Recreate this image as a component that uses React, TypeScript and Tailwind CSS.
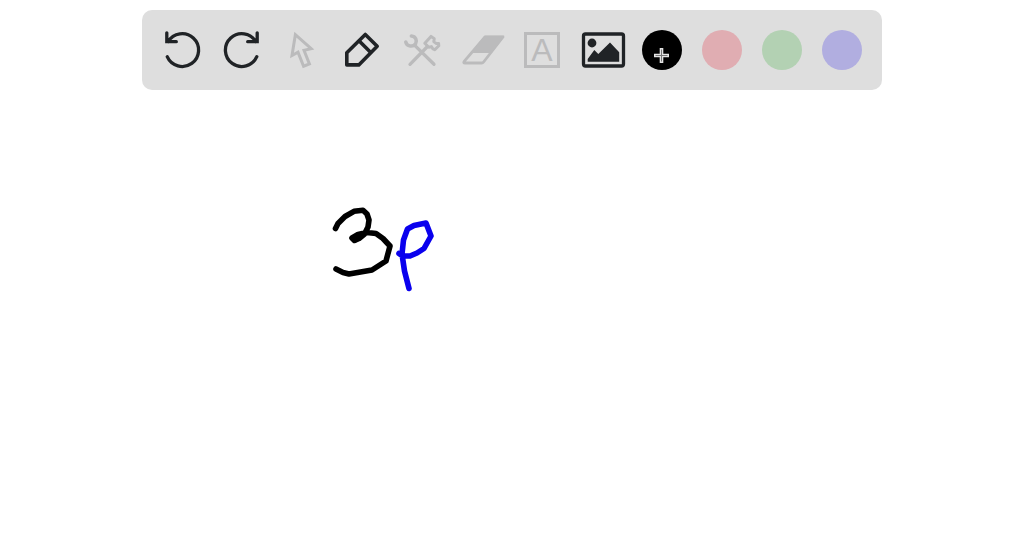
import { useState, type ReactNode } from "react";

type Tool = { label: string; icon: ReactNode; active: boolean };

function Icon({ children }: { children: ReactNode }) {
  return (
    <svg
      viewBox="0 0 48 48"
      className="size-12"
      fill="none"
      stroke="currentColor"
      strokeWidth="3.3"
      strokeLinecap="round"
      strokeLinejoin="round"
      aria-hidden="true"
    >
      {children}
    </svg>
  );
}

const tools: Tool[] = [
  {
    label: "Undo",
    active: true,
    icon: (
      <Icon>
        <path strokeLinejoin="miter" d="M8.8 6.8v8.9h9.5M10.1 15.7A16.4 16.4 0 1 1 9.2 30.7" />
      </Icon>
    ),
  },
  {
    label: "Redo",
    active: true,
    icon: (
      <Icon>
        <path strokeLinejoin="miter" d="M39.2 6.8v8.9h-9.5M37.9 15.7A16.4 16.4 0 1 0 38.8 30.7" />
      </Icon>
    ),
  },
  {
    label: "Select",
    active: false,
    icon: (
      <Icon>
        <path
          strokeWidth="3"
          strokeLinejoin="miter"
          d="M17.4 8.6 14 29.5 20 26.2 25.6 40.2 31.4 38 26 24.3 33.2 22.6Z"
        />
      </Icon>
    ),
  },
  {
    label: "Pen",
    active: true,
    icon: (
      <Icon>
        <path strokeWidth="3.6" d="M27.3 8.5 39.2 20.3 20.8 38.9H8.8V26.7ZM21 14.8 33 26.7" />
      </Icon>
    ),
  },
  {
    label: "Tools",
    active: false,
    icon: (
      <Icon>
        <path d="M17 19.6 36 38.3M12 38.3 29 21" />
        <path strokeWidth="3.6" d="M13.4 10C17.6 10.4 19.4 14.4 17.6 17.6 15.4 21.2 8.6 20.8 7.8 16" />
        <path
          strokeWidth="3"
          d="M26.8 17.2 33 10.4 36.2 12.8 35.8 15.6 38.4 17.6 40.6 17.4 40.8 19.8 36.8 23.8 34.6 22.6 33.4 20.6 30.8 21.2Z"
        />
      </Icon>
    ),
  },
  {
    label: "Eraser",
    active: false,
    icon: (
      <Icon>
        <path strokeWidth="2.8" d="M27 11H45L25.6 36Q24.8 37 23.6 37H7Q5 37 6.2 35.4Z" />
        <path fill="currentColor" stroke="none" d="M26.5 9.7H46.4L33.4 27H13.6Z" />
      </Icon>
    ),
  },
  {
    label: "Text",
    active: false,
    icon: (
      <span className="flex size-9 items-center justify-center border-3 border-current text-[32px] leading-none">
        A
      </span>
    ),
  },
  {
    label: "Image",
    active: true,
    icon: (
      <Icon>
        <rect x="5.5" y="8" width="40" height="32" rx="2" />
        <circle cx="14" cy="17" r="4.4" fill="currentColor" stroke="none" />
        <path
          fill="currentColor"
          stroke="none"
          d="M9.7 35.8V33L16.3 24 20.3 28 32 16.4 41.2 26.3V35.8Z"
        />
      </Icon>
    ),
  },
];

const colours = [
  { label: "Black", swatch: "bg-black" },
  { label: "Red", swatch: "bg-[#e0adb2]" },
  { label: "Green", swatch: "bg-[#b3d1b3]" },
  { label: "Blue", swatch: "bg-[#b1aee0]" },
];

export default function App() {
  const [colour, setColour] = useState("Black");

  return (
    <div className="flex min-h-screen flex-col bg-white font-['Liberation_Sans',sans-serif]">
      <header className="flex justify-center pt-2.5">
        <div role="toolbar" aria-label="Drawing tools" className="flex rounded-[10px] bg-[#dedede] p-2.5">
          {tools.map((tool) => (
            <button
              key={tool.label}
              type="button"
              aria-label={tool.label}
              className={
                tool.active
                  ? "flex size-15 items-center justify-center text-[#202326]"
                  : "flex size-15 items-center justify-center text-[#bbbbbc]"
              }
            >
              {tool.icon}
            </button>
          ))}
          {colours.map((c) => (
            <button
              key={c.label}
              type="button"
              aria-label={c.label}
              aria-pressed={colour === c.label}
              onClick={() => setColour(c.label)}
              className="flex size-15 items-center justify-center"
            >
              <span className={`${c.swatch} flex size-10 items-center justify-center rounded-full`}>
                {colour === c.label && (
                  <svg viewBox="0 0 40 40" className="size-10" fill="none" aria-hidden="true">
                    <path stroke="#e4e4e4" strokeWidth="3.6" d="M19.5 18v15M12 25.5h15" />
                    <path stroke="#777" strokeWidth="1" d="M19.5 19.5v12M13.5 25.5h12" />
                  </svg>
                )}
              </span>
            </button>
          ))}
        </div>
      </header>
      <main className="flex flex-1 justify-center">
        <svg
          viewBox="0 90 1024 470"
          className="h-[470px] w-full"
          role="img"
          aria-label="Handwritten 3p"
          fill="none"
          strokeWidth="5.6"
          strokeLinecap="round"
          strokeLinejoin="round"
        >
          <path
            stroke="#000"
            d="M335.5 228.5 338 223.5 345 216.5 354 211.3 363 210.3 367 214 369 220 368 227 364.5 234 359 238.5 354.5 240.5 352 238 358 234.5 367 232.5 376 233.5 383 238.5 390 246 386 261 372 270 349 274 343 272.5 336 269"
          />
          <path fill="#000" stroke="#000" d="M353 238.5 358 235.5 361 236 354.5 240Z" />
          <path
            stroke="#0a00ee"
            d="M399 253.5 402.5 256 410 256 417 253 424 248.5 431 236 426 223 414 225.5 407.5 229 403.5 240 402 254 404.5 271 409 288.5"
          />
        </svg>
      </main>
    </div>
  );
}
